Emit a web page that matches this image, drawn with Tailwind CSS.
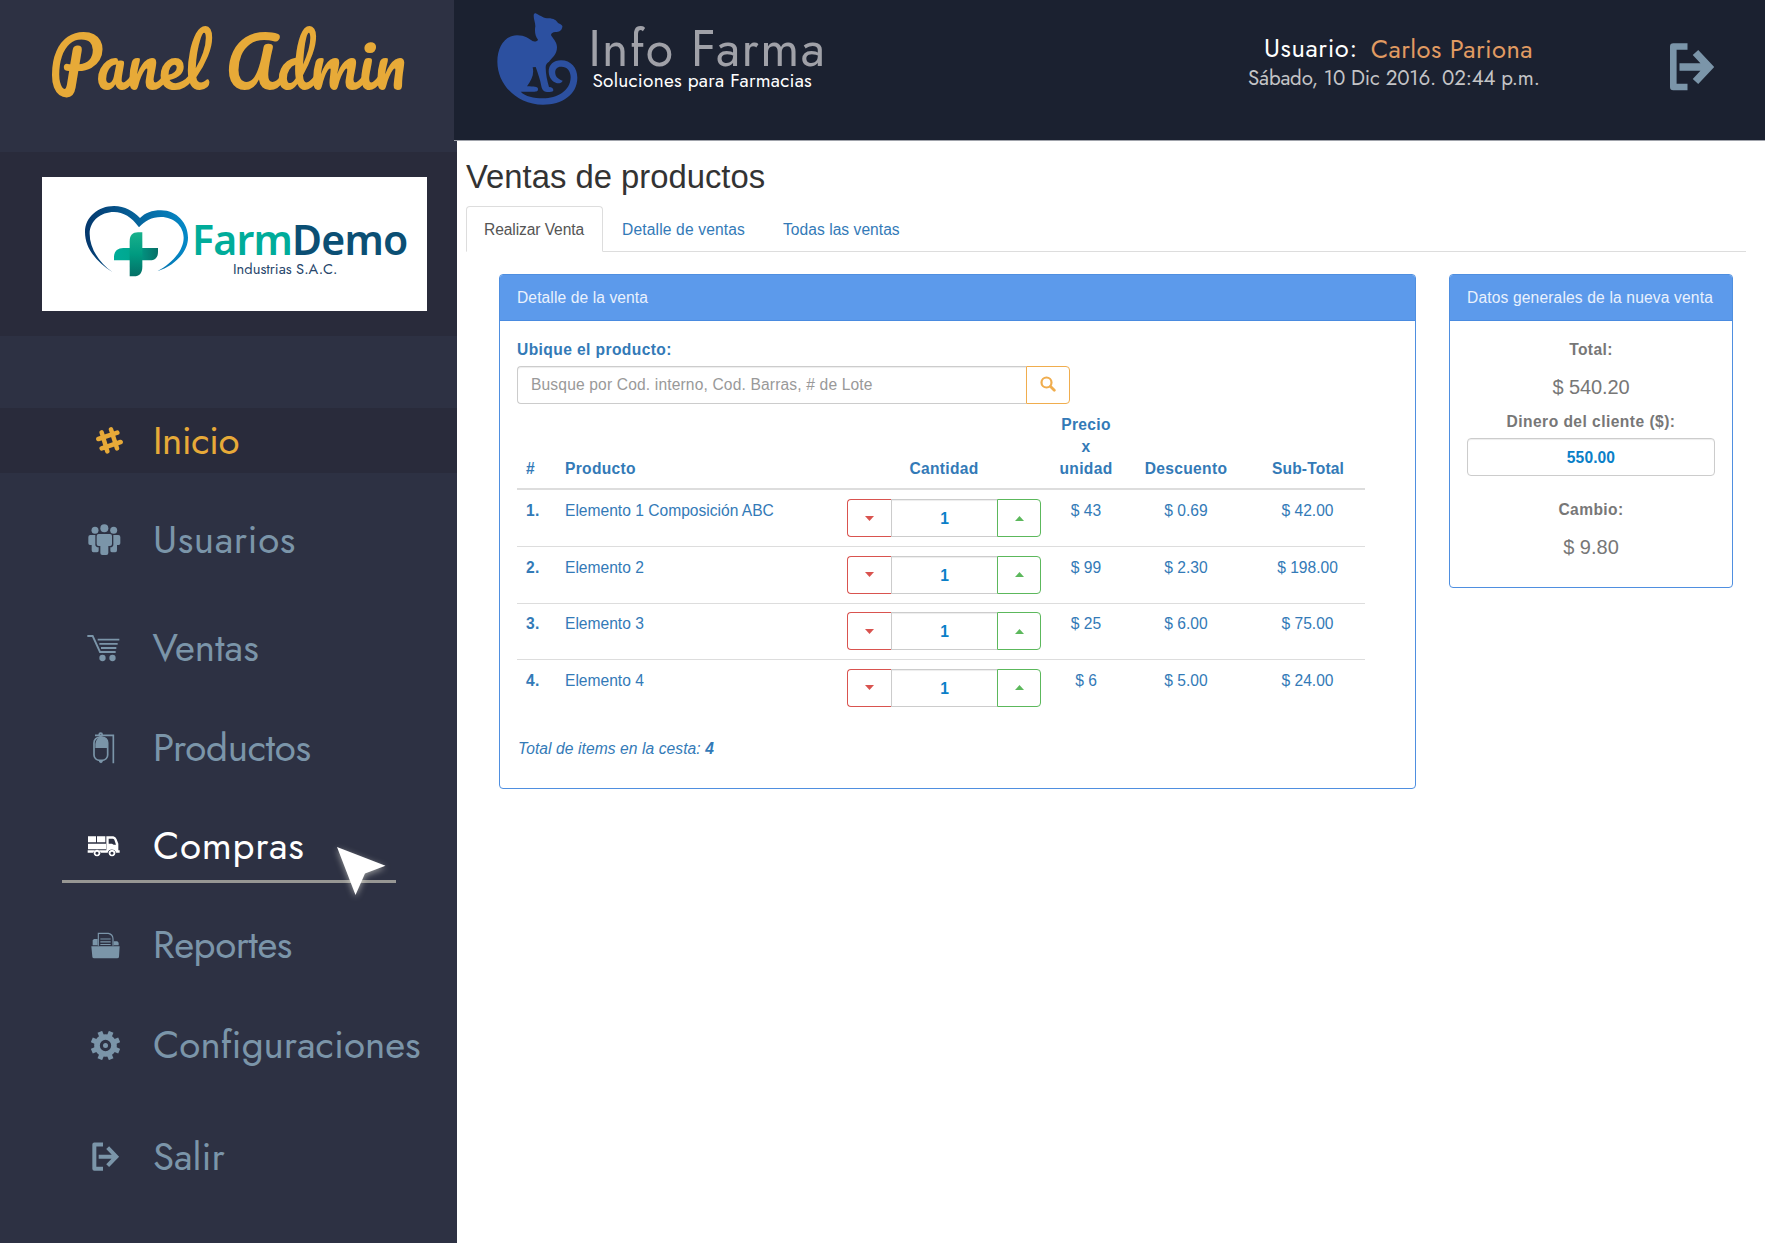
<!DOCTYPE html>
<html lang="es">
<head>
<meta charset="utf-8">
<title>Info Farma</title>
<script src="https://cdn.jsdelivr.net/npm/@tailwindcss/browser@4"></script>
</head>
<body class="bg-white overflow-hidden font-['Liberation_Sans',Arial,sans-serif] text-[15.6px] leading-[22px]">
<div class="flex w-[1765px] h-[1243px]">

  <aside class="w-[457px] shrink-0 bg-[#2d3143] text-[#7b95a9] font-['Jost',Lato,sans-serif]">
    <div class="h-[152px] pl-[49px] pt-[3px] text-[#e7aa38] text-[66px] leading-[116px] whitespace-nowrap font-['Pacifico',Lato,cursive]"><span class="inline-block origin-left scale-x-[0.985] scale-y-[1.04]">Panel Admin</span></div>

    <div class="h-[184px] bg-[#292b3b] pl-[42px] pt-[25px]">
      <div class="w-[385px] h-[134px] bg-white flex pl-[43px] pt-7">
        <svg class="w-[103px] h-[72px] shrink-0" viewBox="255 614 309 216">
          <defs>
            <linearGradient id="h" x1="0" x2="1"><stop offset="0" stop-color="#04376c"/><stop offset=".5" stop-color="#06639b"/><stop offset="1" stop-color="#058ac8"/></linearGradient>
            <linearGradient id="v" x1="0" x2="0" y1="0" y2="1"><stop offset="0" stop-color="#19b18c"/><stop offset=".5" stop-color="#009a80"/><stop offset="1" stop-color="#046f66"/></linearGradient>
            <linearGradient id="w" x1="0" x2="1"><stop offset="0" stop-color="#00ac98"/><stop offset=".4" stop-color="#00a78f"/><stop offset="1" stop-color="#077067"/></linearGradient>
          </defs>
          <path fill="url(#h)" d="M338 816C290 785 255 745 255 695C255 650 295 617 342 617C375 617 400 632 420 653C436 638 455 630 483 630C530 630 564 668 564 712C564 755 525 795 472 813C515 790 551 750 551 712C551 678 522 650 483 650C455 650 435 662 417 681C395 650 370 635 342 635C302 635 269 662 269 700C269 742 295 785 338 816Z"/>
          <path fill="url(#w)" d="M370 743H474V755C474 771 465 780 450 780H342V770C342 753 353 743 370 743Z"/>
          <path fill="url(#v)" d="M427 696V800C427 818 418 828 402 828H389V722C389 706 398 696 414 696Z"/>
        </svg>
        <div class="ml-1 mt-3">
          <div class="font-['Noto_Sans',sans-serif] font-semibold text-[41px] leading-[44px] tracking-[-0.800px] text-[#0b4f74]"><span class="text-[#00ac9a]">Farm</span>Demo</div>
          <div class="-mt-[2px] pl-[41px] text-[14.700px] leading-5 text-[#27466b]">Industrias S.A.C.</div>
        </div>
      </div>
    </div>

    <nav class="mt-[72px] text-[38.5px] leading-[65px]">
      <a class="flex items-center h-[65px] bg-[#292b3b] text-[#e7aa38]">
        <svg class="ml-[95.5px] w-[27px] h-[27px]" viewBox="288 82 81 81" stroke="currentColor" stroke-width="13.5" stroke-linecap="round"><path d="M305 98L322 155M333 89L351 146M295 118L352 99M305 146L362 127"/></svg>
        <span class="ml-[30.500px] tracking-[-0.500px]">Inicio</span>
      </a>
      <a class="flex items-center h-[65px] mt-[34px]">
        <svg class="ml-[87.5px] w-[33px] h-[31px]" viewBox="262 372 99 93" fill="currentColor"><circle cx="311" cy="385" r="12"/><circle cx="283" cy="391" r="10.5"/><circle cx="339" cy="391" r="10.5"/><path d="M294 402H328Q334 402 334 408V432Q334 438 328 438H323V459Q323 465 317 465H305Q299 465 299 459V438H294Q288 438 288 432V408Q288 402 294 402Z"/><path d="M269 405H284V434Q284 441 294 442V452Q294 457 288 457H278Q273 457 273 451V435H268Q263 435 263 430V411Q263 405 269 405ZM353 405H338V434Q338 441 329 442V452Q329 457 335 457H344Q349 457 349 451V435H354Q359 435 359 430V411Q359 405 353 405Z"/></svg>
        <span class="ml-[32.500px] tracking-[0.600px]">Usuarios</span>
      </a>
      <a class="flex items-center h-[65px] mt-[43px]">
        <svg class="ml-[87px] w-[33px] h-[28px]" viewBox="262 701 99 84" fill="none" stroke="currentColor" stroke-width="5.500"><path d="M263 707H279L301 755H348M294 718H359M299 730.500H354M304 743H350"/><g fill="currentColor" stroke="none"><circle cx="308.500" cy="773" r="9.500"/><circle cx="338.500" cy="773" r="9.500"/></g></svg>
        <span class="ml-[32.500px] tracking-[0.100px]">Ventas</span>
      </a>
      <a class="flex items-center h-[65px] mt-[35px]">
        <svg class="ml-[92px] w-[24px] h-[32px]" viewBox="276 92 72 96" fill="none" stroke="currentColor" stroke-width="5"><path d="M285 102H340V186"/><circle cx="302" cy="100" r="4.500"/><rect x="282" y="108" width="41" height="69" rx="16"/><path fill="currentColor" stroke="none" d="M286 140V128Q288 112 300 107H312Q323 112 323 124V140ZM297 177H308V182L303 186L297 182Z"/></svg>
        <span class="ml-[37px] tracking-[-0.300px]">Productos</span>
      </a>
      <a class="relative flex items-center h-[65px] mt-[33px] text-white">
        <svg class="ml-[87px] mt-[2px] w-[33px] h-[21px]" viewBox="261 410 99 63" fill="currentColor"><path d="M264 411H288V429H264ZM291 411H316V429H291ZM264 433H318V450H264ZM319 411H340Q347 412 350 420L355 433V453H359V460H348A13 13 0 0 0 323 460H303A13 13 0 0 0 279 460H263V453H319ZM326 418V433H336L341 436H348L343 421Q341 418 338 418Z" fill-rule="evenodd"/><path fill-rule="evenodd" d="M291 451a10 10 0 1 0 .1 0ZM291 457a4.500 4.500 0 1 1-.1 0ZM336 451a10 10 0 1 0 .1 0ZM336 457a4.500 4.500 0 1 1-.1 0Z"/></svg>
        <span class="ml-[33px] tracking-[0.700px]">Compras</span>
        <span class="absolute left-[62px] top-[67px] w-[334px] h-[3px] bg-[#979794]"></span>
        <svg class="absolute left-[327px] top-[24px] w-[70px] h-[70px] drop-shadow-[0_2px_3px_rgba(255,255,240,0.5)]" viewBox="-10 -10 70 70" fill="#fff"><path d="M0 0L48.500 18.700L28 26.500L18.500 48Z"/></svg>
      </a>
      <a class="flex items-center h-[65px] mt-[34px]">
        <svg class="ml-[91px] mt-px w-[29px] h-[27px]" viewBox="274 695 87 81" fill="none" stroke="currentColor" stroke-width="3.500"><path d="M296 736V699H326Q340 702 340 716V736M302 716H333M302 724.500H333M302 732.500H333"/><path fill="currentColor" stroke="none" d="M275 738H360L358 769Q358 774 352 774H284Q278 774 278 769ZM279 735V720L283 716H294V735ZM342 735V723H353L357 727V735Z"/></svg>
        <span class="ml-[33px] tracking-[-0.400px]">Reportes</span>
      </a>
      <a class="flex items-center h-[65px] mt-[35px]">
        <svg class="ml-[91px] mt-px w-[29px] h-[29px]" viewBox="-43.500 -43.500 87 87" fill="none" stroke="currentColor"><circle r="25.500" stroke-width="17"/><g stroke-width="15"><path d="M-11 -26.500L-17 -41M11 -26.500L17 -41M26.500 -11L41 -17M26.500 11L41 17M11 26.500L17 41M-11 26.500L-17 41M-26.500 11L-41 17M-26.500 -11L-41 -17"/></g><circle r="7.500" fill="currentColor" stroke="none"/></svg>
        <span class="ml-[33px]">Configuraciones</span>
      </a>
      <a class="flex items-center h-[65px] mt-[47px]">
        <svg class="ml-[92px] w-[28px] h-[29px]" viewBox="276 547 84 87" fill="none" stroke="currentColor" stroke-width="12"><path d="M309 554.500H283V627H309" stroke-linejoin="round"/><path d="M296 591H345M323 564L349 591L323 618"/></svg>
        <span class="ml-[33px]">Salir</span>
      </a>
    </nav>
  </aside>

  <div class="grow">
    <header class="relative -ml-[3px] h-[141px] bg-[#1b2130] border-b border-[#a0a3ab] flex items-start pl-[42.700px] pr-[51px] font-['Jost',Lato,sans-serif] whitespace-nowrap">
      <svg class="mt-[13.300px] w-[81.700px] h-[93.300px] shrink-0" viewBox="140 40 245 280" fill="#2c50a0"><path d="M256 41C268 46 275 54 290 56C310 55 318 62 323 70C330 74 338 76 336 82C334 94 326 97 315 97C306 98 300 102 303 108C312 120 320 130 320 143C320 165 305 175 296 186C290 190 286 195 286 203C286 225 291 245 296 262C305 262 309 266 309 272C309 276 305 277 298 277H290C280 277 275 270 273 260C270 240 262 220 256 202L247 203C252 225 244 240 230 260C250 261 263 260 263 268C263 276 258 276 250 276H211C225 290 250 296 278 296C320 296 360 275 361 233C361 212 348 200 332 201C318 201 313 212 315 222C317 234 325 238 337 243C334 250 325 252 318 250C305 247 295 232 295 215C295 196 310 182 332 182C362 182 381 205 381 234C381 285 335 315 278 315C200 315 141 255 141 186C141 140 165 107 200 107C225 107 235 118 248 125C256 126 262 124 263 120C255 110 252 95 255 80C255 68 250 60 250 48C250 42 253 41 256 41Z"/></svg>
      <div class="ml-[10px] mt-6">
        <div class="text-[50px] leading-[50px] tracking-[1.500px] text-[#a0a1a8]">Info Farma</div>
        <div class="-mt-[5px] ml-1 text-[19px] leading-6 tracking-[0.250px] text-white">Soluciones para Farmacias</div>
      </div>
      <div class="ml-auto w-[291px] mt-[34px]">
        <div class="flex pl-[16px] text-[25.500px] leading-[30px] text-white"><span class="tracking-[0.600px]">Usuario:</span><span class="ml-[13px] mt-[1px] tracking-[0.400px] text-[#e19b62]">Carlos Pariona</span></div>
        <div class="mt-px text-[20.500px] leading-6 tracking-[-0.150px] text-[#c4c4c6]">Sábado, 10 Dic 2016. 02:44 p.m.</div>
      </div>
      <svg class="ml-[131px] mt-[43px] w-[44px] h-[48px] shrink-0 text-[#7b95a9]" viewBox="0 0 44 48" fill="none" stroke="currentColor" stroke-width="6.600"><path d="M17.500 3.500H3.300V44H17.500" stroke-linejoin="round"/><path stroke-width="7.500" d="M9.500 24H37M25.500 9.500L39 24L25.500 38.500"/></svg>
    </header>

    <main class="pt-4 text-[#337ab7]">
      <h1 class="ml-[9px] text-[32.800px] leading-10 text-[#333]">Ventas de productos</h1>
      <div class="mt-[9px] ml-[9px] mr-[19px] h-[46px] flex border-b border-[#ddd] leading-[46px]">
        <a class="h-[46px] w-[137px] pl-[17px] border border-b-white border-[#ddd] rounded-t-[4px] bg-white text-[#555] tracking-[-0.100px]">Realizar Venta</a>
        <a class="h-[45px] ml-px px-[18px] pt-px tracking-[0.150px]">Detalle de ventas</a>
        <a class="h-[45px] ml-[2px] px-[18px] pt-px tracking-[0.030px]">Todas las ventas</a>
      </div>

      <div class="mt-[22px] ml-[42px] flex items-start gap-[33px]">
        <section class="w-[917px] h-[515px] border border-[#4f8fe0] rounded-[4px]">
          <h2 class="h-[46px] leading-[46px] pl-[17px] bg-[#5c9aeb] border-b border-[#4a8be0] rounded-t-[3px] text-[#e9f1fd] tracking-[0.100px]">Detalle de la venta</h2>
          <div class="px-[17px] pt-[18px]">
            <label class="block font-bold tracking-[0.400px]">Ubique el producto:</label>
            <div class="mt-[5px] flex w-[553px] h-[38px]">
              <div class="grow h-[38px] leading-[36px] pl-[13px] border border-r-0 border-[#ccc] rounded-l-[4px] text-[#999] tracking-[0.150px] shadow-[inset_0_1px_1px_rgba(0,0,0,0.075)]">Busque por Cod. interno, Cod. Barras, # de Lote</div>
              <div class="w-[44px] h-[38px] pb-[2px] border border-[#f0ad4e] rounded-r-[4px] flex items-center justify-center">
                <svg class="w-4 h-4" viewBox="0 0 16 16" fill="none" stroke="#f0ad4e"><circle cx="6.500" cy="6.500" r="5" stroke-width="2.200"/><path d="M10.500 10.500L14.300 14.300" stroke-width="2.800" stroke-linecap="round"/></svg>
              </div>
            </div>

            <div class="w-[848px]">
              <div class="grid grid-cols-[39px_282px_212px_72px_128px_115px] h-[86px] pb-[8px] items-end border-b-2 border-[#ddd] font-bold text-center tracking-[0.300px]">
                <div class="text-left pl-[9px]">#</div>
                <div class="text-left pl-[9px]">Producto</div>
                <div>Cantidad</div>
                <div>Precio<br>x<br>unidad</div>
                <div>Descuento</div>
                <div class="pl-px tracking-[0.150px]">Sub-Total</div>
              </div>
              <div id="rows"></div>
            </div>
            <p class="mt-[22px] italic pl-px tracking-[0.080px]">Total de items en la cesta: <b>4</b></p>
          </div>
        </section>

        <section class="w-[284px] h-[314px] border border-[#4f8fe0] rounded-[4px]">
          <h2 class="h-[46px] leading-[46px] pl-[17px] bg-[#5c9aeb] border-b border-[#4a8be0] rounded-t-[3px] text-[#e9f1fd] tracking-[0.150px] whitespace-nowrap">Datos generales de la nueva venta</h2>
          <div class="px-[17px] pt-[18px] text-center text-[#777]">
            <div class="font-bold tracking-[0.400px]">Total:</div>
            <div class="mt-[12px] text-[20px] leading-7 tracking-[-0.100px]">$ 540.20</div>
            <div class="mt-[10px] font-bold tracking-[0.450px]">Dinero del cliente ($):</div>
            <div class="mt-[5px] h-[38px] leading-[37px] border border-[#ccc] rounded-[4px] font-bold text-[#0a80c8] tracking-[0.100px] shadow-[inset_0_1px_1px_rgba(0,0,0,0.075)]">550.00</div>
            <div class="mt-[23px] font-bold tracking-[0.400px]">Cambio:</div>
            <div class="mt-[12px] text-[20px] leading-7">$ 9.80</div>
          </div>
        </section>
      </div>
    </main>
  </div>
</div>

<script>
  const items = [
    ['Elemento 1 Composición ABC', '$ 43', '$ 0.69', '$ 42.00'],
    ['Elemento 2', '$ 99', '$ 2.30', '$ 198.00'],
    ['Elemento 3', '$ 25', '$ 6.00', '$ 75.00'],
    ['Elemento 4', '$ 6', '$ 5.00', '$ 24.00'],
  ];
  document.getElementById('rows').innerHTML = items.map(([name, price, discount, sub], i) => `
    <div class="grid grid-cols-[39px_282px_212px_72px_128px_115px] h-[56.600px] first:h-[56px] pt-[8.600px] text-center border-t border-[#ddd] first:border-t-0 first:pt-[9px]">
      <div class="text-left pt-px pl-[9px] font-bold tracking-[0.400px]">${i + 1}.</div>
      <div class="text-left pt-px pl-[9px]">${name}</div>
      <div class="mx-[9px] h-[38px] flex leading-[37px]">
        <div class="w-[44px] border border-r-0 border-[#d9534f] rounded-l-[4px] flex items-center justify-center"><svg class="w-[9px] h-[5px]" viewBox="0 0 9 5" fill="#d9534f"><path d="M0 0H9L4.500 5Z"/></svg></div>
        <div class="grow border border-r-0 border-[#ccc] font-bold text-[#0a80c8] shadow-[inset_0_1px_1px_rgba(0,0,0,0.075)]">1</div>
        <div class="w-[44px] border border-[#5cb85c] rounded-r-[4px] flex items-center justify-center"><svg class="w-[9px] h-[5px]" viewBox="0 0 9 5" fill="#5cb85c"><path d="M0 5H9L4.500 0Z"/></svg></div>
      </div>
      <div class="pt-px">${price}</div><div class="pt-px">${discount}</div><div class="pt-px">${sub}</div>
    </div>`).join('');
</script>
</body>
</html>
